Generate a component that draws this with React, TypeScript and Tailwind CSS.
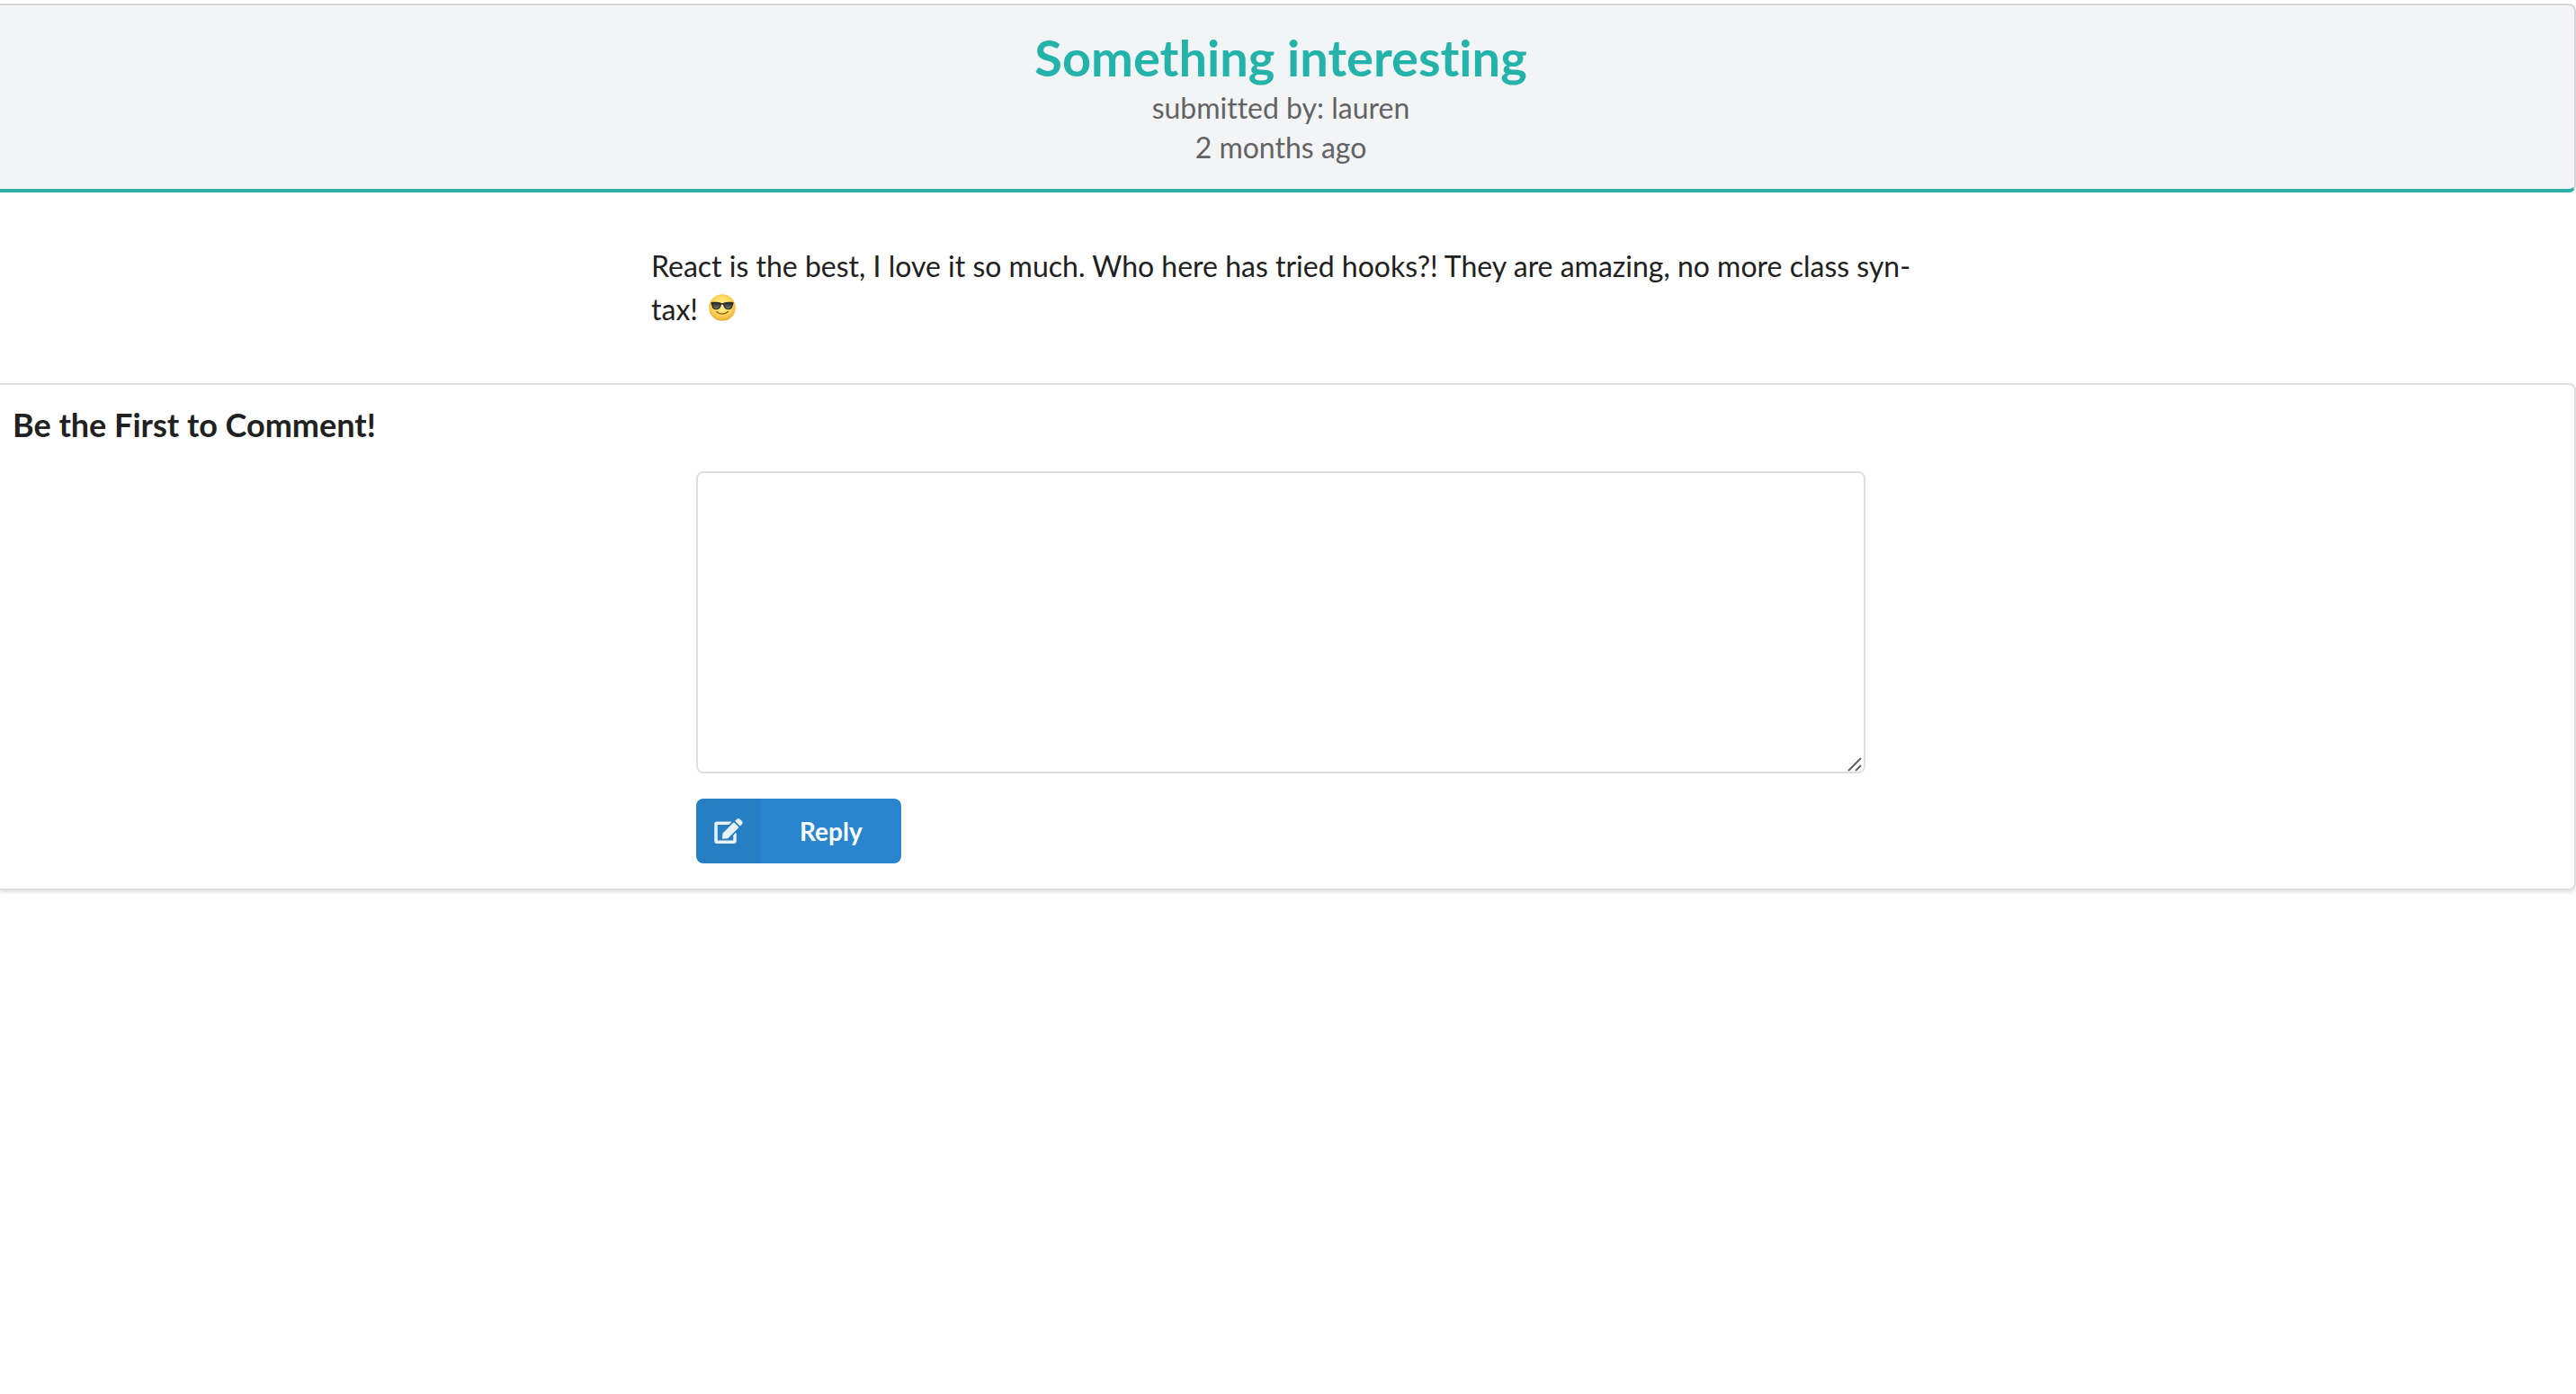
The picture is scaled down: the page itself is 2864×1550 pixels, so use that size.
import { FaEdit } from "react-icons/fa";

function SunglassesEmoji() {
  return (
    <svg
      role="img"
      aria-label="smiling face with sunglasses"
      viewBox="0 0 30 30"
      className="ml-1 inline-block size-[30px] align-[-1px]"
    >
      <defs>
        <radialGradient id="face" cx="0.5" cy="0.42" r="0.58">
          <stop offset="0" stopColor="#fff294" />
          <stop offset="0.5" stopColor="#fde068" />
          <stop offset="0.85" stopColor="#f8c044" />
          <stop offset="1" stopColor="#e9a535" />
        </radialGradient>
        <linearGradient id="lens" x1="0" y1="0" x2="0" y2="1">
          <stop offset="0" stopColor="#2b2b2a" />
          <stop offset="1" stopColor="#75736c" />
        </linearGradient>
      </defs>
      <circle cx="15" cy="15" r="14.8" fill="url(#face)" />
      <path
        d="M2.300 9.200C6 8.300 11 8.700 13.400 9.700c1 .4 2.200.4 3.200 0C19 8.700 24 8.300 27.700 9.200l-.2 1.700c-.5.300-.7.900-.8 1.600-.4 3-1.700 4.800-5 4.800-3 0-4.600-1.700-5.400-4.500-.2-.9-.5-1.300-1.300-1.300s-1.100.4-1.300 1.300c-.8 2.800-2.400 4.500-5.400 4.500-3.300 0-4.600-1.800-5-4.800-.1-.7-.3-1.300-.8-1.600z"
        fill="#2d2c29"
      />
      <path d="M4.500 10.300c2.400-.6 5.600-.4 8 .6-.2 3-1.600 5.300-4.300 5.300-2.800 0-3.700-2.300-3.700-5.900z" fill="url(#lens)" />
      <path d="M25.500 10.300c-2.400-.6-5.600-.4-8 .6.2 3 1.600 5.300 4.300 5.300 2.800 0 3.700-2.300 3.700-5.900z" fill="url(#lens)" />
      <path
        d="M8.600 19.600c3.300 3.300 9.500 3.300 12.800 0"
        fill="none"
        stroke="#8a5a1c"
        strokeWidth="1.400"
        strokeLinecap="round"
      />
    </svg>
  );
}

function ResizeGrip() {
  return (
    <svg
      aria-hidden="true"
      viewBox="0 0 16 16"
      className="pointer-events-none absolute right-1 bottom-0.5 size-4"
    >
      <path d="M1 15 15 1M9 15l6-6" stroke="#5c5c5c" strokeWidth="1.800" />
    </svg>
  );
}

export default function App() {
  return (
    <main className="min-h-screen bg-white pt-1 font-[Lato,sans-serif] text-[#212121] [font-variant-ligatures:none]">
      <header className="rounded-r-lg border-2 border-b-4 border-l-0 border-[#d4d4d5] border-b-[#2fada7] bg-[#f3f4f5] pt-7 pr-3.5 pb-6 text-center text-[32px] leading-[44px] text-[#626364]">
        <h1 className="mb-1 text-[56px] leading-[60px] font-bold text-[#23b3ab]">Something interesting</h1>
        <p>submitted by: lauren</p>
        <p>2 months ago</p>
      </header>

      <div className="py-[58px] pr-3">
        <p className="mx-auto max-w-[1404px] text-[32px] leading-[48px]">
          React is the best, I love it so much. Who here has tried hooks?! They are amazing, no more class syn&shy;tax!{" "}
          <SunglassesEmoji />
        </p>
      </div>

      <section className="rounded-r-lg border-2 border-l-0 border-[#dededf] pt-[26px] pr-3.5 pb-7 shadow-[0_2px_4px_rgba(34,36,38,0.15)]">
        <h2 className="pl-3.5 text-[36px] leading-9 font-bold">
          <label htmlFor="comment">Be the First to Comment!</label>
        </h2>
        <form className="mx-auto mt-[34px] max-w-[1300px]" onSubmit={(e) => e.preventDefault()}>
          <div className="relative">
            <textarea
              id="comment"
              className="block h-[336px] w-full resize-y rounded-lg border-2 border-[#dededf] bg-white px-7 py-5 text-[28px] leading-9 outline-none focus:border-[#85b7d9] [&::-webkit-resizer]:bg-transparent"
            />
            <ResizeGrip />
          </div>
          <button
            type="submit"
            className="mt-7 flex h-[72px] items-center overflow-hidden rounded-lg bg-[#2986ce] text-[28px] leading-7 font-bold text-white"
          >
            <span className="flex size-[72px] items-center justify-center bg-black/5">
              <FaEdit aria-hidden="true" className="h-7 w-8 opacity-90" />
            </span>
            <span className="px-[43px]">Reply</span>
          </button>
        </form>
      </section>
    </main>
  );
}
